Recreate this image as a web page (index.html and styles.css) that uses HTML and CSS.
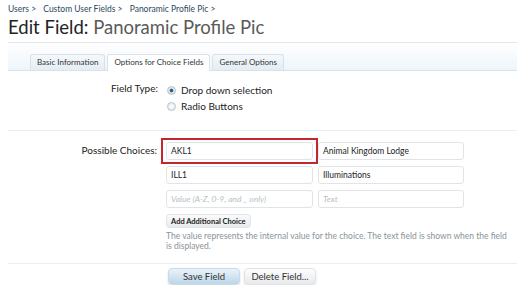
FILE: index.html
```html
<!DOCTYPE html>
<html lang="en">
<head>
    <meta charset="UTF-8">
    <title>Edit Field: Panoramic Profile Pic</title>
    <link rel="stylesheet" href="styles.css">
</head>
<body>
    <div id="pagina">
        <div class="breadcrumb">
            <a href="#">Users &gt;</a>
            <a href="#">Custom User Fields &gt;</a>
            <a href="#">Panoramic Profile Pic &gt;</a>
        </div>
        <h1 class="titulo"><span class="titulo-tipo">Edit Field:</span> Panoramic Profile Pic</h1>

        <div class="tabs-bar">
            <ul class="tabs">
                <li class="tab">Basic Information</li>
                <li class="tab activa">Options for Choice Fields</li>
                <li class="tab">General Options</li>
            </ul>
        </div>

        <div class="fila fila-tipo">
            <div class="etiqueta">Field Type:</div>
            <div class="controles">
                <label class="radio"><span class="circulo marcado"></span>Drop down selection</label>
                <label class="radio"><span class="circulo"></span>Radio Buttons</label>
            </div>
        </div>

        <div class="fila fila-opciones">
            <div class="etiqueta etiqueta-opciones">Possible Choices:</div>
            <div class="controles">
                <div class="opcion">
                    <div class="resaltado"><div class="campo">AKL1</div></div>
                    <div class="campo campo-texto">Animal Kingdom Lodge</div>
                </div>
                <div class="opcion">
                    <div class="campo">ILL1</div>
                    <div class="campo campo-texto">Illuminations</div>
                </div>
                <div class="opcion">
                    <div class="campo vacio">Value (A-Z, 0-9, and _ only)</div>
                    <div class="campo campo-texto vacio">Text</div>
                </div>
                <button class="boton-chico">Add Additional Choice</button>
                <p class="ayuda">The value represents the internal value for the choice. The text field is shown when the field is displayed.</p>
            </div>
        </div>

        <div class="fila-botones">
            <button class="boton boton-primario">Save Field</button>
            <button class="boton">Delete Field...</button>
        </div>
    </div>
</body>
</html>
```

FILE: styles.css
```css
* {
    margin: 0;
    padding: 0;
    box-sizing: border-box;
}

body {
    font-family: Lato, "Noto Sans", sans-serif;
    background-color: #fff;
    color: #333;
    overflow: hidden;
}

#pagina {
    padding: 0 0 0 8px;
}

.breadcrumb {
    font-size: 8.5px;
    color: #2b485c;
    padding-top: 4px;
    height: 15px;
}

.breadcrumb a {
    color: #2b485c;
    text-decoration: none;
    margin-right: 5px;
}

.titulo {
    font-size: 18.5px;
    font-weight: normal;
    color: #5a5a5a;
    line-height: 24px;
}

.titulo-tipo {
    color: #222;
}

.tabs-bar {
    margin-top: 3px;
    height: 29px;
    border-top: 1px solid #e0e8ee;
    border-bottom: 1px solid #d8e2ea;
    background: linear-gradient(to bottom, #fff 0%, #eef5fa 100%);
    display: flex;
    align-items: flex-end;
    padding-left: 22px;
}

.tabs {
    list-style: none;
    display: flex;
    gap: 2px;
    margin-bottom: -1px;
}

.tab {
    font-size: 8px;
    color: #333;
    height: 16px;
    line-height: 15px;
    padding: 0 6px;
    border: 1px solid #d8e2ea;
    border-bottom: none;
    border-radius: 3px 3px 0 0;
    background: linear-gradient(to bottom, #f4f8fb, #e4edf3);
}

.activa {
    background: #fff;
    height: 17px;
}

.fila {
    display: flex;
}

.etiqueta {
    width: 158px;
    text-align: right;
    font-size: 10px;
    color: #222;
    padding-right: 8px;
}

.fila-tipo {
    padding-top: 11px;
    height: 60px;
    border-bottom: 1px solid #e8eef2;
}

.radio {
    display: flex;
    align-items: center;
    font-size: 10px;
    color: #222;
    height: 16px;
}

.circulo {
    width: 9px;
    height: 9px;
    border-radius: 50%;
    border: 1px solid #b8c4cc;
    background: radial-gradient(circle, #fff, #dde4e8);
    margin-right: 5px;
    margin-left: 1px;
}

.marcado {
    background: radial-gradient(circle, #2b5a7a 0, #3d6d8c 30%, #d6e0e6 45%, #eef2f4 100%);
}

.fila-opciones {
    padding-top: 11px;
}

.etiqueta-opciones {
    padding-right: 9px;
    padding-top: 2px;
}

.controles {
    display: flex;
    flex-direction: column;
}

.opcion {
    display: flex;
    align-items: center;
    gap: 4px;
    margin-bottom: 6px;
}

.resaltado {
    border: 2px solid #c0282d;
    padding: 2px 3px;
    margin: -4px -5px;
}

.campo {
    width: 147px;
    height: 18px;
    border: 1px solid #dfe4e8;
    border-radius: 3px;
    background: #fff;
    font-size: 8.5px;
    line-height: 16px;
    padding-left: 4px;
    color: #222;
}

.campo-texto {
    width: 146px;
    margin-left: 1px;
}

.vacio {
    color: #b8bfc4;
    font-style: italic;
}

.boton-chico {
    align-self: flex-start;
    font-family: inherit;
    font-size: 7.5px;
    font-weight: bold;
    color: #222;
    height: 14px;
    padding: 0 4px;
    border: 1px solid #e2e6e9;
    border-radius: 3px;
    background: linear-gradient(to bottom, #fafafa, #e8ebed);
}

.ayuda {
    font-size: 8.5px;
    color: #8a9399;
    line-height: 10px;
    margin-top: 3px;
    width: 345px;
}

.fila-botones {
    margin-top: 12px;
    border-top: 1px solid #e8eef2;
    padding-top: 4px;
    padding-left: 160px;
    display: flex;
    gap: 4px;
}

.boton {
    font-family: inherit;
    font-size: 9.5px;
    color: #333;
    width: 72px;
    height: 17px;
    border: 1px solid #e0e4e8;
    border-radius: 4px;
    background: linear-gradient(to bottom, #fdfdfd, #e6e9ec);
    box-shadow: 0 1px 2px rgba(0, 0, 0, 0.15);
}

.boton-primario {
    background: linear-gradient(to bottom, #eaf3fa, #bcd6e8);
    border-color: #c8dbe8;
}
```
